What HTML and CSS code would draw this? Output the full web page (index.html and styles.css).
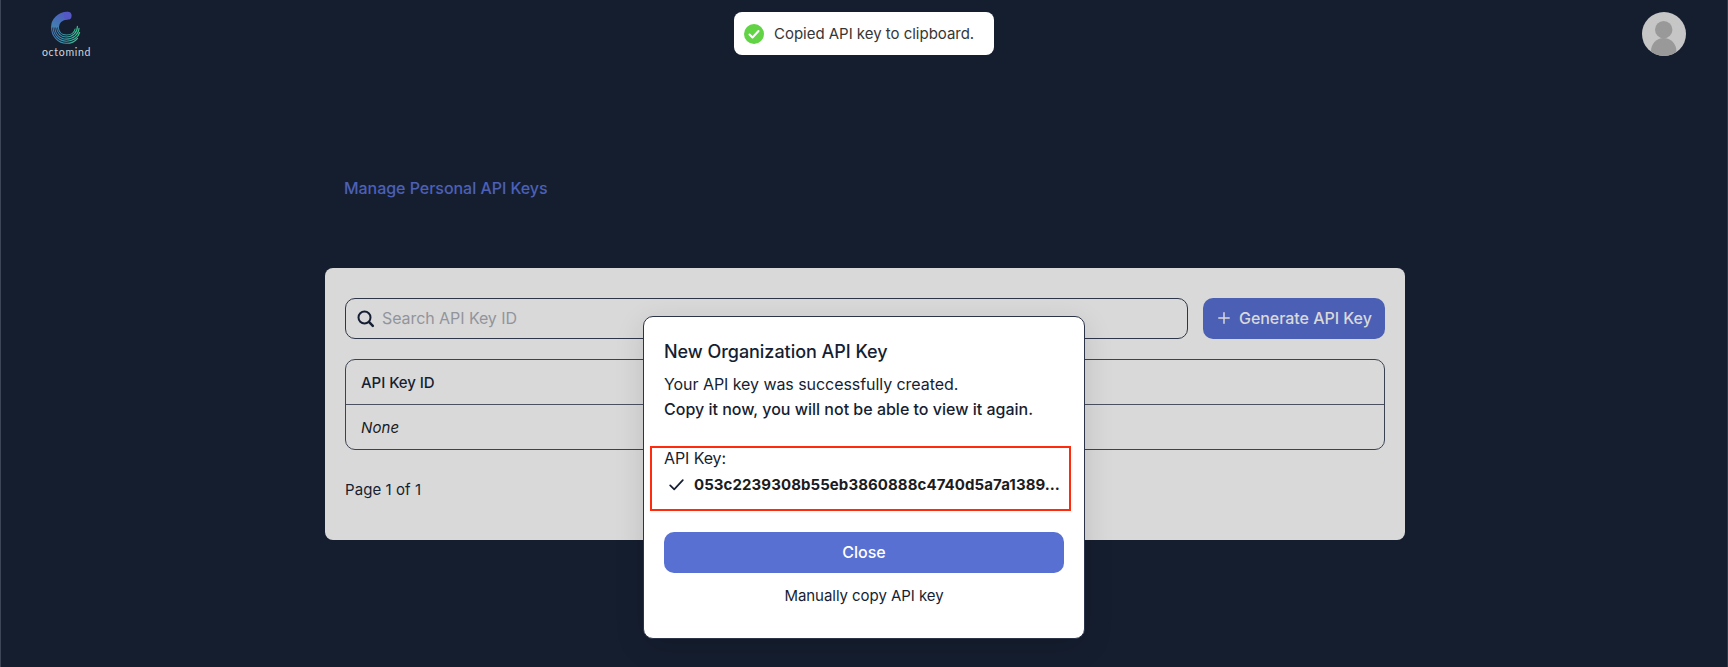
FILE: index.html
```html
<!DOCTYPE html>
<html lang="en">
<head>
<meta charset="utf-8">
<title>Octomind – API Keys</title>
<link rel="stylesheet" href="styles.css">
</head>
<body>
<div class="app">
  <header class="topbar">
    <div class="logo">
      <svg width="32" height="34" viewBox="0 0 32 34" fill="none">
        <defs>
          <linearGradient id="brand" gradientUnits="userSpaceOnUse" x1="20" y1="2" x2="8" y2="26">
            <stop offset="0" stop-color="#5457c4"/><stop offset=".5" stop-color="#4672b5"/><stop offset="1" stop-color="#3f8fac"/>
          </linearGradient>
          <linearGradient id="arms" gradientUnits="userSpaceOnUse" x1="2" y1="17" x2="31" y2="17">
            <stop offset="0" stop-color="#4672b5"/><stop offset=".5" stop-color="#3b9da6"/><stop offset="1" stop-color="#3dd08b"/>
          </linearGradient>
        </defs>
        <path d="M17.500 4.700C10 4.900 4.900 10 4.900 16.500" stroke="url(#brand)" stroke-width="7.800"/>
        <circle cx="17.700" cy="4.700" r="3.900" fill="#5457c4"/>
        <g stroke="url(#arms)" stroke-width="1.100" stroke-linecap="round">
          <path d="M1.500 16c0 9.300 6.600 16.300 15 16.300 5 0 8.500-1.800 11-5"/>
          <path d="M3.100 16c.2 8.400 6 14.200 13.300 14.200 6.400 0 11.800-3.500 13.200-8.700"/>
          <path d="M4.800 16c.3 7.400 5.200 12.100 11.600 12.100 6.600 0 12-4.500 12.600-10.700"/>
          <path d="M6.500 16c.4 6.200 4.500 10 9.900 10 6.500 0 11-4.500 11-10.800"/>
          <path d="M8.200 16c.4 5 3.700 8 8.200 8 4.600 0 8-2.600 8.700-6"/>
        </g>
      </svg>
      <span class="wordmark">octomind</span>
    </div>
    <svg class="avatar" width="44" height="44" viewBox="0 0 44 44">
      <clipPath id="round"><circle cx="22" cy="22" r="22"/></clipPath>
      <g clip-path="url(#round)">
        <rect width="44" height="44" fill="#c6c6c6"/>
        <circle cx="21.700" cy="17.700" r="8.700" fill="#999"/>
        <path d="M9 44v-5c0-7.300 5.700-13 12.700-13s12.700 5.700 12.700 13v5z" fill="#999"/>
      </g>
    </svg>
  </header>

  <main class="content">
    <a class="heading">Manage Personal API Keys</a>
    <section class="panel">
      <div class="toolbar">
        <div class="search">
          <svg width="18" height="18" viewBox="0 0 18 18" fill="none" stroke="#151e32" stroke-linecap="round">
            <circle cx="7.500" cy="7.500" r="6" stroke-width="2"/><path d="M12.200 12.200l3.600 3.600" stroke-width="2.500"/>
          </svg>
          <span class="placeholder">Search API Key ID</span>
        </div>
        <button class="btn generate">
          <svg width="12" height="12" viewBox="0 0 12 12" stroke="#d9d9d9" stroke-width="1.500" stroke-linecap="round"><path d="M6 .8v10.400M.8 6h10.400"/></svg>
          <span class="generate-label">Generate API Key</span>
        </button>
      </div>
      <div class="table">
        <div class="row head"><span class="col">API Key ID</span></div>
        <div class="row"><em class="none">None</em></div>
      </div>
      <div class="pager"><span class="page">Page 1 of 1</span></div>
    </section>
  </main>

  <div class="modal">
    <h2 class="title"><span>New Organization API Key</span></h2>
    <p class="line"><span class="created">Your API key was successfully created.</span></p>
    <p class="line warn"><span class="copy-now">Copy it now, you will not be able to view it again.</span></p>
    <div class="key-block">
      <div class="key-label">API Key:</div>
      <div class="key-row">
        <svg width="15" height="12" viewBox="0 0 15 12" fill="none" stroke="#151e32" stroke-width="1.700" stroke-linecap="round" stroke-linejoin="round"><path d="M1.200 6.400l4 4L13.800 1.200"/></svg>
        <span class="key">053c2239308b55eb3860888c4740d5a7a1389…</span>
      </div>
    </div>
    <button class="btn close">Close</button>
    <a class="manual">Manually copy API key</a>
  </div>

  <div class="toast">
    <svg width="20" height="20" viewBox="0 0 20 20" fill="none"><circle cx="10" cy="10" r="10" fill="#61d345"/><path d="M5.500 10.500l3 3 6-6.500" stroke="#fff" stroke-width="2" stroke-linecap="round" stroke-linejoin="round"/></svg>
    <span class="toast-text">Copied API key to clipboard.</span>
  </div>
</div>
</body>
</html>
```
FILE: styles.css
```css
* { box-sizing: border-box; }
body { margin: 0; font-family: Inter, "Liberation Sans", sans-serif; font-size: 16px; color: #151e32; background: #151e2f; }
svg { display: block; flex: none; }
.app { position: relative; height: 667px; background: #151e2f; border-left: 1px solid #3d4657; border-right: 1px solid #30394a; overflow: hidden; white-space: nowrap; }
.topbar { display: flex; justify-content: space-between; align-items: flex-start; height: 68px; padding: 11px 41px 0 40px; }
.logo { display: flex; flex-direction: column; align-items: center; width: 51px; }
.logo svg { margin-left: -1px; }
.wordmark { font: 10.5px/14px Lato, sans-serif; letter-spacing: .7px; color: #d2d4d8; }
.avatar { margin-top: 1px; }
.content { width: 1080px; margin: 0 0 0 324px; padding-top: 109px; }
.heading { display: block; padding-left: 19px; line-height: 23px; font-weight: 500; letter-spacing: -.04px; color: #4c60b8; }
.panel { height: 272px; margin-top: 68px; padding: 30px 20px 0; background: #d9d9d9; border-radius: 8px; }
.toolbar { display: flex; gap: 15px; }
.search { flex: 1; display: flex; align-items: center; gap: 7px; height: 41px; padding-left: 11px; border: 1px solid #2e374a; border-radius: 10px; color: #92949c; }
.placeholder { letter-spacing: -.07px; padding-bottom: 1px; }
.btn { border: 0; border-radius: 10px; height: 41px; font: 500 16px/24px Inter, "Liberation Sans", sans-serif; padding: 0 0 1px; }
.generate { display: flex; align-items: center; gap: 9px; width: 182px; padding-left: 15px; background: #4b5fb5; color: #d9d9d9; letter-spacing: -.04px; }
.table { height: 91px; margin-top: 20px; border: 1px solid #3b4353; border-radius: 10px; }
.row { display: flex; align-items: center; height: 44px; padding-left: 15px; font-size: 15px; }
.head { height: 45px; border-bottom: 1px solid #4b5160; font-weight: 500; letter-spacing: -.05px; }
.none { color: #191b20; letter-spacing: .1px; }
.pager { margin-top: 28px; line-height: 24px; font-size: 15px; letter-spacing: .08px; }
.modal { position: absolute; left: 642px; top: 316px; width: 442px; height: 323px; padding: 22px 20px 0; background: #fff; border: 1px solid #2b3448; border-radius: 10px; box-shadow: 0 8px 30px rgba(0,0,0,.12); }
.title { margin: 0; font-size: 18px; line-height: 25px; font-weight: 500; letter-spacing: -.04px; }
.line { margin: 0; line-height: 25px; }
.title + .line { margin-top: 8px; }
.created { letter-spacing: -.06px; }
.warn { font-weight: 500; }
.key-block { width: 421px; height: 65px; margin: 24px 0 0 -14px; padding-left: 12px; border: 2px solid #fe2b0d; }
.key-label { line-height: 25px; margin-top: -2px; letter-spacing: -.1px; }
.key-row { display: flex; align-items: center; gap: 10px; height: 25px; margin-top: 1px; padding-left: 5px; font-size: 15px; font-weight: 700; color: #1b1c20; letter-spacing: .08px; }
.close { display: block; width: 400px; margin-top: 21px; background: #5970d3; color: #fff; }
.manual { display: block; margin-top: 11px; text-align: center; line-height: 24px; font-size: 15px; letter-spacing: -.05px; }
.toast { position: absolute; left: 733px; top: 12px; display: flex; align-items: center; gap: 10px; width: 260px; height: 43px; padding-left: 10px; background: #fff; border-radius: 8px; color: #363636; }
.toast-text { font-size: 15px; padding-bottom: 1px; letter-spacing: -.02px; }
```
